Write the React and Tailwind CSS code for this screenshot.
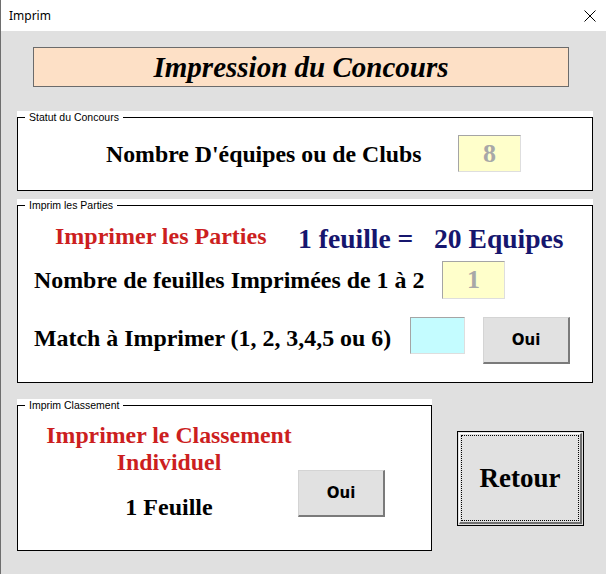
import React from 'react';

const serif = "font-['Liberation_Serif',serif] font-bold";

const Legend = ({ children }) => (
  <legend className="ml-[7px] px-[4px] text-[10.5px] leading-[12px] font-['Liberation_Sans',sans-serif] text-black">
    {children}
  </legend>
);

const ValueBox = ({ value, className = '' }) => (
  <div
    className={`flex items-center justify-center border border-t-[#a5a5a5] border-l-[#a5a5a5] border-r-[#dedede] border-b-[#dedede] ${className}`}
  >
    <span className={`${serif} text-[26px] leading-none text-[#a8a8a8]`}>{value}</span>
  </div>
);

const OuiButton = ({ className = '' }) => (
  <button
    type="button"
    className={`flex items-center justify-center bg-[#e1e1e1] border-t border-l border-t-[#d4d4d4] border-l-[#d4d4d4] border-r-2 border-b-2 border-r-[#7a7a7a] border-b-[#7a7a7a] font-['DejaVu_Sans',sans-serif] font-bold text-[15px] text-black ${className}`}
  >
    Oui
  </button>
);

const App = () => {
  return (
    <div className="w-[606px] h-[574px] bg-[#e0e0e0] border-l border-[#6e6e6e] flex flex-col overflow-hidden">
      {/* Title bar */}
      <div className="h-[31px] bg-white flex items-center justify-between pl-[8px] pr-[10px] shrink-0">
        <span className="text-[12px] font-['Noto_Sans',sans-serif] text-black">Imprim</span>
        <svg width="12" height="12" viewBox="0 0 12 12" className="text-black">
          <path d="M0.5 0.5 L11.5 11.5 M11.5 0.5 L0.5 11.5" stroke="currentColor" strokeWidth="1" />
        </svg>
      </div>

      <div className="pl-[16px] flex flex-col">
        {/* Header banner */}
        <div className="ml-[16px] mt-[16px] w-[536px] h-[40px] bg-[#fde0c6] border border-[#6b6b6b] flex items-center justify-center">
          <span className={`${serif} italic text-[29px] leading-none text-black`}>Impression du Concours</span>
        </div>

        {/* Statut du Concours */}
        <div className="mt-[24px] w-[576px] bg-white">
          <fieldset className="h-[80px] border border-black px-0">
            <Legend>Statut du Concours</Legend>
            <div className="mt-[12px] pl-[88px] flex items-center">
              <span className={`${serif} w-[352px] text-[23.8px] leading-[28px] text-black`}>Nombre D'équipes ou de Clubs</span>
              <ValueBox value="8" className="w-[63px] h-[37px] bg-[#ffffcb]" />
            </div>
          </fieldset>
        </div>

        {/* Imprim les Parties */}
        <div className="mt-[8px] w-[576px] bg-white">
          <fieldset className="h-[184px] border border-black px-0">
            <Legend>Imprim les Parties</Legend>
            <div className="mt-[11px] pl-[37px] flex items-start">
              <span className={`${serif} w-[243px] text-[24px] leading-[28px] text-[#cc1f1f]`}>Imprimer les Parties</span>
              <span className={`${serif} w-[136px] mt-[1px] text-[27.6px] leading-[32px] text-[#16166e]`}>1 feuille =</span>
              <span className={`${serif} mt-[1px] text-[27.6px] leading-[32px] text-[#16166e]`}>20 Equipes</span>
            </div>
            <div className="mt-[6px] pl-[16px] flex items-center">
              <span className={`${serif} w-[408px] text-[23.9px] leading-[28px] text-black`}>Nombre de feuilles Imprimées de 1 à 2</span>
              <ValueBox value="1" className="w-[63px] h-[38px] bg-[#ffffcb]" />
            </div>
            <div className="mt-[18px] pl-[16px] flex items-start">
              <div className="w-[376px] h-[41px] flex items-center">
                <span className={`${serif} text-[23.9px] leading-[28px] text-black`}>Match à Imprimer (1, 2, 3,4,5 ou 6)</span>
              </div>
              <div className="w-[55px] h-[37px] bg-[#c4fcff] border border-t-[#a5a5a5] border-l-[#a5a5a5] border-r-[#dedede] border-b-[#dedede]" />
              <OuiButton className="ml-[18px] w-[87px] h-[47px]" />
            </div>
          </fieldset>
        </div>

        {/* Imprim Classement + Retour */}
        <div className="mt-[16px] flex items-start">
          <div className="w-[415px] bg-white">
            <fieldset className="h-[152px] border border-black px-0">
              <Legend>Imprim Classement</Legend>
              <div className="pl-[28px] flex items-start">
                <div className="w-[246px] mt-[11px] flex flex-col items-center text-center">
                  <span className={`${serif} whitespace-nowrap text-[23.8px] leading-[27px] text-[#cc1f1f]`}>Imprimer le Classement</span>
                  <span className={`${serif} text-[23.8px] leading-[27px] text-[#cc1f1f]`}>Individuel</span>
                  <span className={`${serif} mt-[17px] text-[24px] leading-[28px] text-black`}>1 Feuille</span>
                </div>
                <OuiButton className="ml-[6px] mt-[59px] w-[87px] h-[47px]" />
              </div>
            </fieldset>
          </div>

          <button
            type="button"
            className="ml-[25px] mt-[32px] w-[127px] h-[95px] bg-[#e1e1e1] border border-black p-[1px]"
          >
            <div className="w-full h-full border-t border-l border-t-white border-l-white border-r-2 border-b-2 border-r-[#6f6f6f] border-b-[#6f6f6f] p-[1px]">
              <div className="w-full h-full border border-dotted border-black flex items-center justify-center">
                <span className={`${serif} text-[27px] leading-none text-black`}>Retour</span>
              </div>
            </div>
          </button>
        </div>
      </div>
    </div>
  );
};

export default App;
